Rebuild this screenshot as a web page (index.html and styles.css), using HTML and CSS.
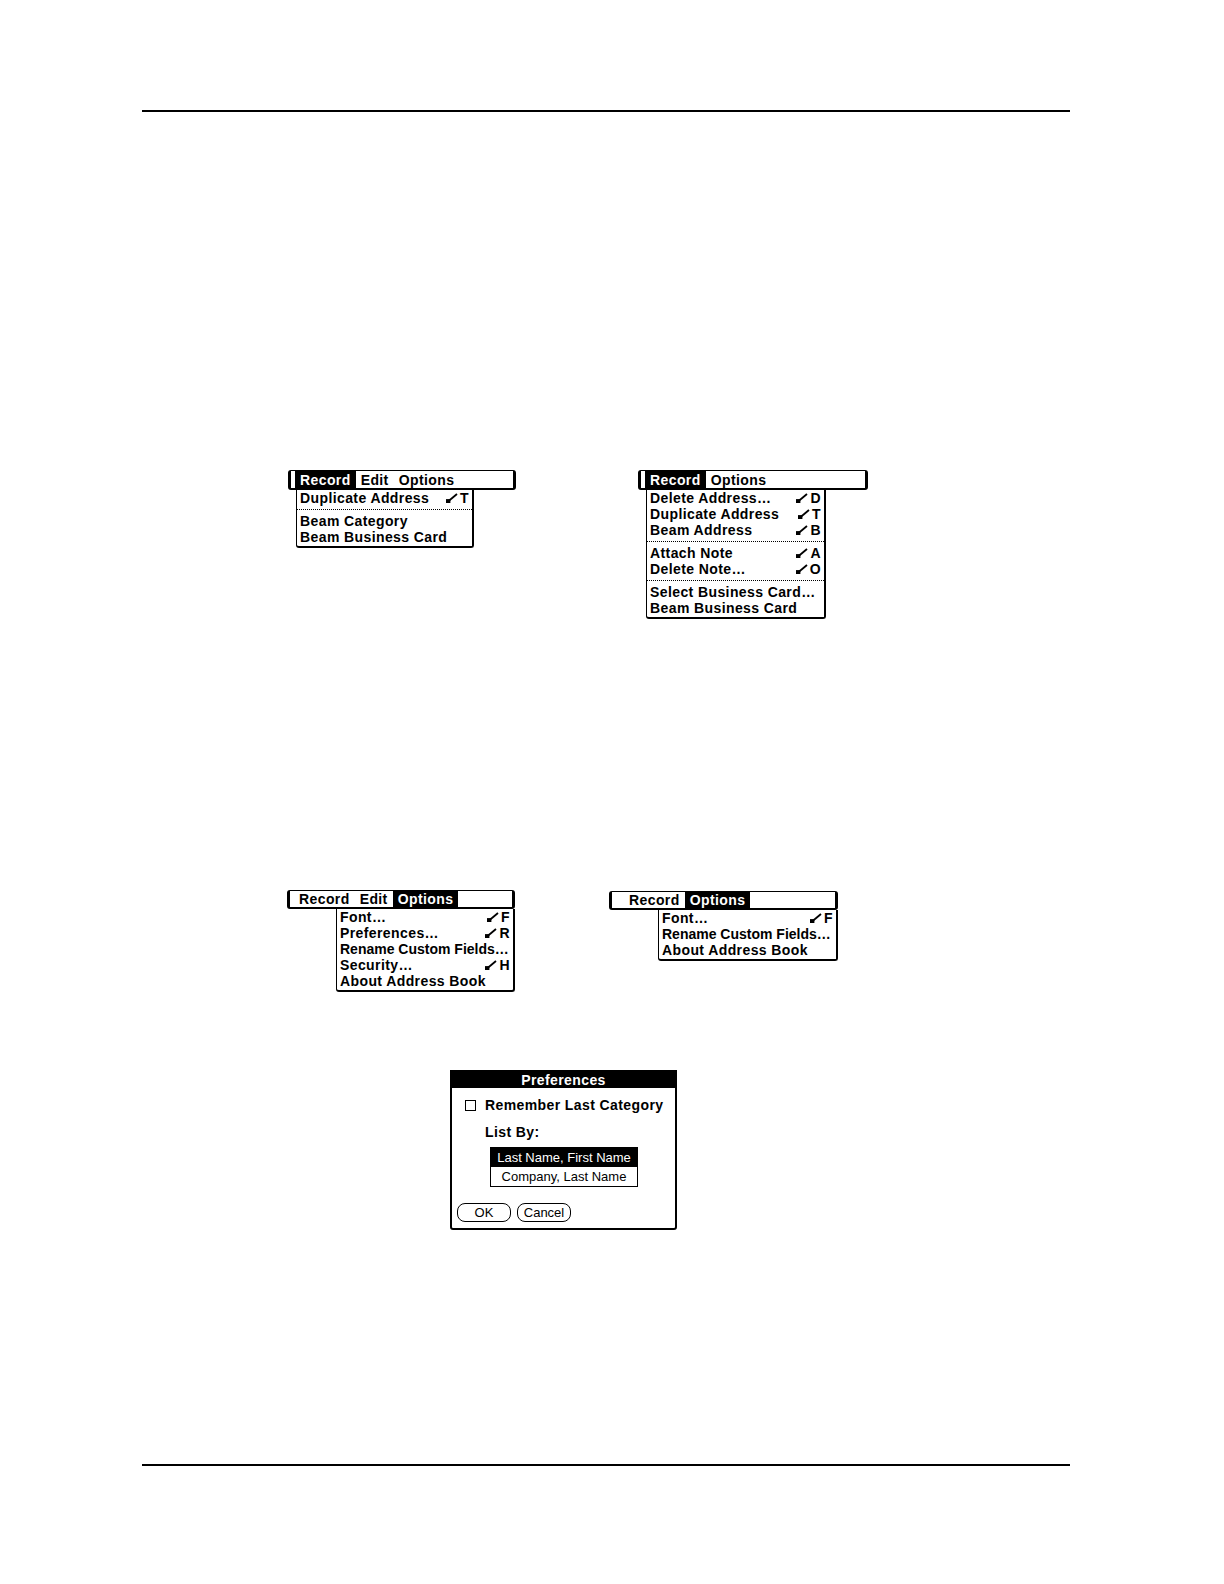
FILE: index.html
```html
<!DOCTYPE html>
<html>
<head>
<meta charset="utf-8">
<link rel="stylesheet" href="styles.css">
</head>
<body>
<div class="page">
  <div class="rule"></div>

  <div class="row row1">
    <div class="menu m1">
      <div class="bar">
        <span class="mi on">Record</span><span class="mi">Edit</span><span class="mi">Options</span>
      </div>
      <div class="drop">
        <div class="it"><span>Duplicate Address</span><span class="sc"><svg class="cmd" viewBox="0 0 12 10"><path d="M2 8.5 L11 1"/><rect x="0" y="7" width="3.5" height="3"/></svg>T</span></div>
        <div class="sep"></div>
        <div class="it"><span>Beam Category</span></div>
        <div class="it"><span>Beam Business Card</span></div>
      </div>
    </div>

    <div class="menu m2">
      <div class="bar">
        <span class="mi on">Record</span><span class="mi">Options</span>
      </div>
      <div class="drop">
        <div class="it"><span>Delete Address…</span><span class="sc"><svg class="cmd" viewBox="0 0 12 10"><path d="M2 8.5 L11 1"/><rect x="0" y="7" width="3.5" height="3"/></svg>D</span></div>
        <div class="it"><span>Duplicate Address</span><span class="sc"><svg class="cmd" viewBox="0 0 12 10"><path d="M2 8.5 L11 1"/><rect x="0" y="7" width="3.5" height="3"/></svg>T</span></div>
        <div class="it"><span>Beam Address</span><span class="sc"><svg class="cmd" viewBox="0 0 12 10"><path d="M2 8.5 L11 1"/><rect x="0" y="7" width="3.5" height="3"/></svg>B</span></div>
        <div class="sep"></div>
        <div class="it"><span>Attach Note</span><span class="sc"><svg class="cmd" viewBox="0 0 12 10"><path d="M2 8.5 L11 1"/><rect x="0" y="7" width="3.5" height="3"/></svg>A</span></div>
        <div class="it"><span>Delete Note…</span><span class="sc"><svg class="cmd" viewBox="0 0 12 10"><path d="M2 8.5 L11 1"/><rect x="0" y="7" width="3.5" height="3"/></svg>O</span></div>
        <div class="sep"></div>
        <div class="it"><span>Select Business Card…</span></div>
        <div class="it"><span>Beam Business Card</span></div>
      </div>
    </div>
  </div>

  <div class="row row2">
    <div class="menu m3">
      <div class="bar short">
        <span class="mi">Record</span><span class="mi">Edit</span><span class="mi on">Options</span>
      </div>
      <div class="drop">
        <div class="it"><span>Font…</span><span class="sc"><svg class="cmd" viewBox="0 0 12 10"><path d="M2 8.5 L11 1"/><rect x="0" y="7" width="3.5" height="3"/></svg>F</span></div>
        <div class="it"><span>Preferences…</span><span class="sc"><svg class="cmd" viewBox="0 0 12 10"><path d="M2 8.5 L11 1"/><rect x="0" y="7" width="3.5" height="3"/></svg>R</span></div>
        <div class="it"><span class="tight">Rename Custom Fields…</span></div>
        <div class="it"><span>Security…</span><span class="sc"><svg class="cmd" viewBox="0 0 12 10"><path d="M2 8.5 L11 1"/><rect x="0" y="7" width="3.5" height="3"/></svg>H</span></div>
        <div class="it"><span>About Address Book</span></div>
      </div>
    </div>

    <div class="menu m4">
      <div class="bar short">
        <span class="mi first">Record</span><span class="mi on">Options</span>
      </div>
      <div class="drop">
        <div class="it"><span>Font…</span><span class="sc"><svg class="cmd" viewBox="0 0 12 10"><path d="M2 8.5 L11 1"/><rect x="0" y="7" width="3.5" height="3"/></svg>F</span></div>
        <div class="it"><span class="tight">Rename Custom Fields…</span></div>
        <div class="it"><span>About Address Book</span></div>
      </div>
    </div>
  </div>

  <div class="row row3">
    <div class="dialog">
      <div class="title">Preferences</div>
      <div class="check-row"><span class="box"></span><span class="label">Remember Last Category</span></div>
      <div class="listby">List By:</div>
      <div class="list">
        <div class="opt sel">Last Name, First Name</div>
        <div class="opt">Company, Last Name</div>
      </div>
      <div class="buttons">
        <span class="btn">OK</span><span class="btn">Cancel</span>
      </div>
    </div>
  </div>

  <div class="rule bottom"></div>
</div>
</body>
</html>
```

FILE: styles.css
```css
* { box-sizing: border-box; }
html, body { margin: 0; padding: 0; background: #fff; }
body {
  font-family: "Liberation Sans", Arial, sans-serif;
  color: #000;
}
.page { padding-top: 110px; padding-bottom: 20px; }
.rule {
  margin-left: 142px;
  width: 928px;
  height: 2px;
  background: #000;
}
.rule.bottom { margin-top: 234px; }

.row { display: flex; align-items: flex-start; }
.row1 { margin-top: 358px; padding-left: 288px; gap: 122px; }
.row2 { margin-top: 271px; padding-left: 287px; gap: 94px; }
.row3 { margin-top: 78px; padding-left: 450px; }

.menu { display: flex; flex-direction: column; }
.m1 { width: 228px; }
.m2 { width: 230px; }
.m3 { width: 228px; }
.m4 { width: 229px; margin-top: 1px; }

.bar {
  height: 20px;
  border: 1px solid #000;
  border-left-width: 3px;
  border-right-width: 3px;
  border-bottom-width: 2px;
  border-radius: 3px;
  padding-left: 4px;
  display: flex;
  align-items: stretch;
  font-weight: bold;
  font-size: 14px;
  letter-spacing: 0.4px;
}
.bar.short { height: 19px; }
.mi {
  padding: 0 5px;
  display: flex;
  align-items: center;
  line-height: 1;
}
.mi.on { background: #000; color: #fff; }
.mi.first { margin-left: 8px; }

.drop {
  border: 2px solid #000;
  border-top: 0;
  border-left-width: 1px;
  border-radius: 0 0 3px 3px;
  padding: 0 3px 1px 3px;
  font-weight: bold;
  font-size: 14px;
  letter-spacing: 0.4px;
}
.m1 .drop { margin-left: 8px; width: 178px; }
.m2 .drop { margin-left: 8px; width: 180px; }
.m3 .drop { margin-left: 49px; width: 179px; }
.m4 .drop { margin-left: 49px; width: 180px; }

.it {
  height: 16px;
  display: flex;
  justify-content: space-between;
  align-items: center;
  white-space: nowrap;
  line-height: 1;
}
.tight { letter-spacing: 0; }
.sc { display: flex; align-items: center; gap: 2px; }
.cmd {
  width: 12px;
  height: 10px;
  fill: #000;
  stroke: #000;
  stroke-width: 1.8;
}
.sep {
  height: 7px;
  margin: 0 -3px;
  background: repeating-linear-gradient(90deg, #000 0 1px, transparent 1px 2px) 0 3px / 100% 1px no-repeat;
}

.dialog {
  width: 227px;
  border: 2px solid #000;
  border-radius: 0 0 3px 3px;
  padding-bottom: 6px;
}
.title {
  height: 16px;
  background: #000;
  color: #fff;
  font-weight: bold;
  font-size: 14px;
  letter-spacing: 0.4px;
  text-align: center;
  line-height: 16px;
}
.check-row {
  margin-top: 9px;
  height: 16px;
  display: flex;
  align-items: center;
  padding-left: 13px;
  font-weight: bold;
  font-size: 14px;
  letter-spacing: 0.4px;
  white-space: nowrap;
}
.box {
  width: 11px;
  height: 11px;
  border: 1px solid #000;
  margin-right: 9px;
  flex: none;
}
.listby {
  margin-top: 11px;
  padding-left: 33px;
  height: 16px;
  line-height: 16px;
  font-weight: bold;
  font-size: 14px;
  letter-spacing: 0.4px;
}
.list {
  margin-top: 7px;
  margin-left: 38px;
  width: 148px;
  border: 1px solid #000;
  font-size: 13px;
}
.opt {
  height: 19px;
  line-height: 19px;
  text-align: center;
  white-space: nowrap;
}
.opt.sel { background: #000; color: #fff; }
.buttons {
  margin-top: 16px;
  padding-left: 5px;
  display: flex;
  gap: 6px;
}
.btn {
  width: 54px;
  height: 19px;
  border: 1px solid #000;
  border-radius: 8px;
  font-size: 13px;
  line-height: 17px;
  text-align: center;
}
```
